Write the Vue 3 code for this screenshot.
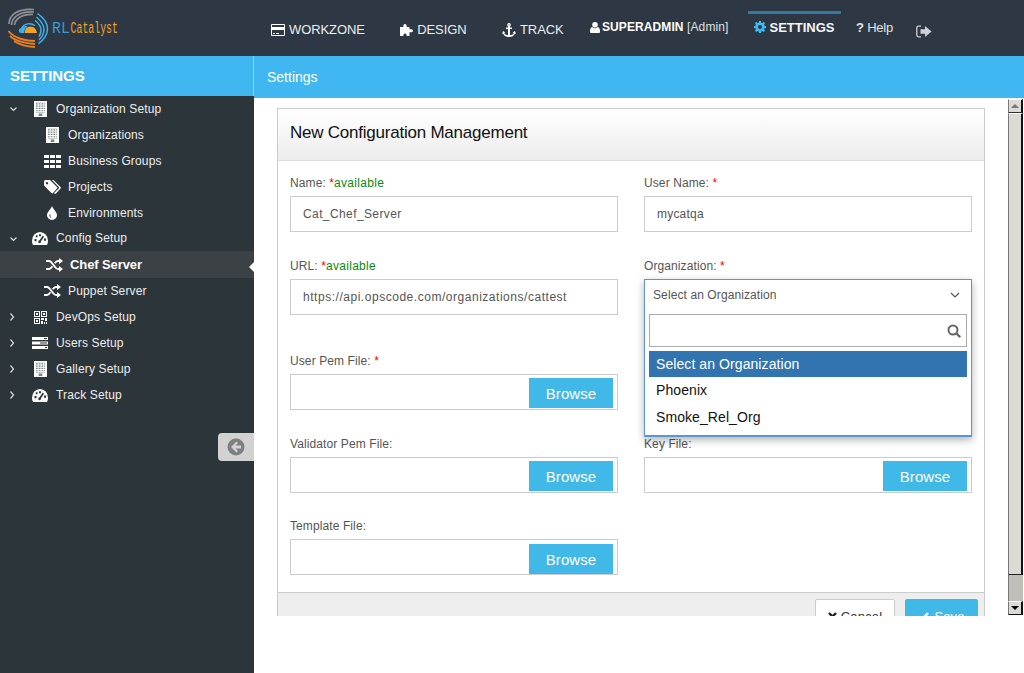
<template>
  <svg class="defs" width="0" height="0">
    <symbol id="i-building" viewBox="0 0 14 18" preserveAspectRatio="none">
      <path fill="#fff" d="M0 0h14v18H0z" />
      <path fill="#7d8285" d="M2 2h10v1H2zM2 4h10v1H2zM2 6h10v1H2zM2 8h10v1H2zM2 10h10v1H2zM2 12h10v1H2zM5 14h4v3H5z" />
      <path fill="#fff" d="M4 2h1v11H4zM7 2h1v11H7zM10 2h1v11h-1z" />
    </symbol>
    <symbol id="i-th" viewBox="0 0 17 13">
      <path fill="#fff" d="M0 0h5v3H0zM6 0h5v3H6zM12 0h5v3h-5zM0 5h5v3H0zM6 5h5v3H6zM12 5h5v3h-5zM0 10h5v3H0zM6 10h5v3H6zM12 10h5v3h-5z" />
    </symbol>
    <symbol id="i-tags" viewBox="0 0 17 14">
      <path fill="#fff" d="M0 1.5Q0 0 1.500 0H6l7 7q.8.8 0 1.600L9 13q-.8.8-1.600 0L.5 6Q0 5.500 0 5zM3 2a1.200 1.200 0 1 0 .01 0z" />
      <path fill="#fff" d="M8 0h1.500l7 7q.8.8 0 1.600L12 13.400q-.8.800-1.600 0l-.4-.4 4.700-4.400q.8-.8 0-1.600z" />
    </symbol>
    <symbol id="i-tint" viewBox="0 0 10 14">
      <path fill="#fff" d="M5 0c1 3 5 6 5 9.200A5 4.800 0 0 1 0 9.200C0 6 4 3 5 0z" />
      <path fill="#2c3539" d="M2.500 8.500q-.6 2.500 2 3.500-1.800-1.500-1-3.500z" />
    </symbol>
    <symbol id="i-dash" viewBox="0 0 16 12" preserveAspectRatio="none">
      <path fill="#fff" d="M8 0a8 8 0 0 1 8 8c0 1.500-.4 2.800-1 4H1C.4 10.800 0 9.500 0 8a8 8 0 0 1 8-8z" />
      <path fill="#2c3539" d="M7 2h2v2H7zM2.500 6.500h2v2h-2zM12 6h2v2h-2zM3.800 3h1.700v1.800H3.800zM10.800 3.300l1.200 1-3 4.200a1.400 1.400 0 1 1-1.500-1z" />
    </symbol>
    <symbol id="i-random" viewBox="0 0 17 14">
      <path fill="none" stroke="#fff" stroke-width="1.800" d="M0 3h3c3.500 0 5.500 8 9 8h2M0 11h3c1.400 0 2.500-1.300 3.400-2.800M8.600 5.200C9.500 4 10.600 3 12 3h2" />
      <path fill="#fff" d="M13 0l4 3-4 3zM13 8l4 3-4 3z" />
    </symbol>
    <symbol id="i-qr" viewBox="0 0 13 13">
      <path fill="#fff" fill-rule="evenodd" d="M0 0h6v6H0zM1 1v4h4V1zM7 0h6v6H7zM8 1v4h4V1zM0 7h6v6H0zM1 8v4h4V8zM2 2h2v2H2zM9 2h2v2H9zM2 9h2v2H2zM7 7h3v2H7zM11 7h2v3h-2zM7 10h2v3H7zM10 11h1v2h-1zM12 11h1v2h-1z" />
    </symbol>
    <symbol id="i-rows" viewBox="0 0 16 12">
      <path fill="#fff" d="M0 0h16v3H0zM0 4.500h16v3H0zM0 9h16v3H0z" />
      <path fill="#2c3539" d="M12 1h3v1h-3zM8 5.500h7v1H8zM13 10h2v1h-2z" />
    </symbol>
    <symbol id="i-card" viewBox="0 0 14 12">
      <path fill="#fff" fill-rule="evenodd" d="M1 0h12a1 1 0 0 1 1 1v10a1 1 0 0 1-1 1H1a1 1 0 0 1-1-1V1a1 1 0 0 1 1-1zM1 6v5h12V6zM1 1v2h12V1z" />
      <path fill="#fff" d="M2 9h2v1H2zM5 9h3v1H5z" />
    </symbol>
    <symbol id="i-puzzle" viewBox="0 0 13 12">
      <path fill="#fff" d="M0 3h3.500C3 2.500 3 .2 5 0c2 .2 2 2.500 1.500 3H9.500v2.500c.6-.6 3.500-.5 3.500 1.200s-2.900 1.900-3.500 1.300V12H6.500c.4-.8 0-2.500-1.500-2.500S3.100 11.200 3.500 12H0z" />
    </symbol>
    <symbol id="i-anchor" viewBox="0 0 14 14">
      <path fill="#fff" fill-rule="evenodd" d="M7 0a1.800 1.800 0 0 1 1 3.300V4.500h2V6H8v6.200c1.900-.2 3.300-1 3.900-2.200l-1.200-.4L13 8l1 3-1-.6C12 12.600 9.800 14 7 14s-5-1.400-6-3.600L0 11l1-3 2.300 1.600-1.200.4C2.700 11.200 4.100 12 6 12.200V6H4V4.500h2V3.300A1.800 1.800 0 0 1 7 0zm0 1.200a.6.6 0 1 0 0 1.200.6.600 0 0 0 0-1.200z" />
    </symbol>
    <symbol id="i-user" viewBox="0 0 10 11">
      <circle fill="#fff" cx="5" cy="2.800" r="2.800" />
      <path fill="#fff" d="M2.200 5C.6 5.500 0 7 0 9.500 0 10.500.5 11 1.300 11h7.400c.8 0 1.300-.5 1.300-1.500C10 7 9.400 5.500 7.800 5 7 6 6 6.300 5 6.300S3 6 2.200 5z" />
    </symbol>
    <symbol id="i-gear" viewBox="0 0 12 12">
      <path fill="#40b7f0" fill-rule="evenodd" d="M5 0h2l.3 1.700 1 .4L9.800 1l1.300 1.300-1 1.500.4 1L12 5v2l-1.500.3-.4 1 1 1.500-1.300 1.300-1.500-1-1 .4L7 12H5l-.3-1.500-1-.4-1.500 1L.9 9.800l1-1.500-.4-1L0 7V5l1.500-.3.400-1-1-1.400L2.200 1l1.500 1 1-.4zM6 4a2 2 0 1 0 0 4 2 2 0 0 0 0-4z" />
    </symbol>
    <symbol id="i-logout" viewBox="0 0 16 13">
      <path fill="none" stroke="#cfd2d4" stroke-width="1.300" d="M5 1.200H2.500Q.8 1.200.8 3v7q0 1.800 1.700 1.800H5" />
      <path fill="#cfd2d4" d="M4.500 4.200H9V1l6.500 5.500L9 12V8.800H4.500z" />
    </symbol>
  </svg>

  <div class="app">
    <header class="top">
      <div class="logo">
        <svg class="logo-mark" viewBox="8 8 41 41" width="41" height="41">
          <g fill="none">
            <path stroke="#8f9193" stroke-width="1.700" d="M9 24C9 15 18 8 34 9.500M11.500 25C12 17 20 11 34 12M14.500 25C15 19 22 14 33 14.500" />
            <path stroke="#3db1ea" stroke-width="1.500" d="M37.500 13.500C44 18 47.500 24 47.500 29 47.500 34 44 40 38.500 43.500M36.500 17C41 21 44 25 44 29.500 44 33 42 37 39 40M35 20.500C39 23.500 41 26.500 41 30 41 32.500 40 35 39 36.500" />
            <path stroke="#ed7d1e" stroke-width="1.800" d="M8.500 31C12 36 22 41 35 41M10 36C14 40 24 43.500 35 44M14 41C19 44.500 27 46.500 35 47" />
            <path stroke="#3db1ea" stroke-width="1.400" d="M21.500 28C24 24 30 22 35 25.500" />
          </g>
          <path fill="#3db1ea" d="M24 33h-3q-2.500-.5-2.300-2.500t2.800-2.400q1.500-2.300 4.500-2.100 1.500 0 1.500 1-3 1-3.500 6z" />
          <path fill="#f0a226" d="M24.500 33q.5-6.500 6-6.500t6.500 6.500z" />
        </svg>
        <span class="logo-text"><span class="logo-rl">RL</span><span class="logo-cat">Catalyst</span></span>
      </div>
      <nav class="nav">
        <a class="nav-link workzone"><svg class="nav-ic" width="14" height="12"><use href="#i-card" /></svg>WORKZONE</a>
        <a class="nav-link gap"><svg class="nav-ic" width="13" height="12"><use href="#i-puzzle" /></svg>DESIGN</a>
        <a class="nav-link gap"><svg class="nav-ic" width="14" height="14"><use href="#i-anchor" /></svg>TRACK</a>
        <span class="who"><svg class="who-ic" width="10" height="11"><use href="#i-user" /></svg><b>SUPERADMIN</b> [Admin]</span>
        <a class="nav-set"><svg class="set-ic" width="12" height="12"><use href="#i-gear" /></svg>SETTINGS</a>
        <a class="help"><b>?</b> Help</a>
        <svg class="logout" width="16" height="13"><use href="#i-logout" /></svg>
      </nav>
    </header>

    <div class="body">
      <aside class="side">
        <div class="side-title">SETTINGS</div>
        <ul class="tree">
          <li
            v-for="item in menu"
            :key="item.label"
            class="row"
            :class="{ child: item.child, active: item.active, short: item.short }"
          >
            <svg v-if="item.open !== undefined" class="chev" width="10" height="10" viewBox="0 0 10 10">
              <path fill="none" stroke="#d9dbdc" stroke-width="1.200" :d="item.open ? 'M2.500 3.500l3 3 3-3' : 'M2.500 1.500l3 3.500-3 3.500'" />
            </svg>
            <span class="ic-slot">
              <svg :width="item.w" :height="item.h"><use :href="'#i-' + item.icon" /></svg>
            </span>
            <span class="row-text">{{ item.label }}</span>
          </li>
        </ul>
        <div class="collapse">
          <svg width="18" height="18" viewBox="0 0 18 18">
            <circle cx="9" cy="9" r="8.500" fill="#7d8083" />
            <path fill="#d2d2d2" d="M9.500 3.500l1.500 1.500-2.500 2.500H14v3H8.500L11 13l-1.500 1.500L4 9z" />
          </svg>
        </div>
      </aside>

      <main class="main">
        <div class="crumb">Settings</div>
        <div class="scroll">
          <div class="view">
            <section class="panel">
              <h2 class="panel-head">New Configuration Management</h2>
              <form class="form" @submit.prevent>
                <div class="field">
                  <label>Name: <i>*</i><em>available</em></label>
                  <input class="text cat" value="Cat_Chef_Server" />
                </div>
                <div class="field">
                  <label>User Name: <i>*</i></label>
                  <input class="text" value="mycatqa" />
                </div>
                <div class="field url">
                  <label>URL: <i>*</i><em>available</em></label>
                  <input class="text long" value="https://api.opscode.com/organizations/cattest" />
                </div>
                <div class="field url org">
                  <label>Organization: <i>*</i></label>
                  <div class="drop">
                    <div class="drop-head">
                      Select an Organization
                      <svg width="10" height="10" viewBox="0 0 10 10">
                        <path fill="none" stroke="#555" stroke-width="1.200" d="M1 3l4 4 4-4" />
                      </svg>
                    </div>
                    <div class="drop-search">
                      <svg width="14" height="14" viewBox="0 0 14 14">
                        <circle cx="6" cy="6" r="4.500" fill="none" stroke="#666" stroke-width="2" />
                        <path stroke="#666" stroke-width="2.400" stroke-linecap="round" d="M9.500 9.500l3 3" />
                      </svg>
                    </div>
                    <ul class="drop-list">
                      <li v-for="(org, i) in orgs" :key="org" :class="{ picked: i === 0 }">{{ org }}</li>
                    </ul>
                  </div>
                </div>
                <div class="field">
                  <label>User Pem File: <i>*</i></label>
                  <div class="file"><span class="browse">Browse</span></div>
                </div>
                <div class="field"></div>
                <div class="field">
                  <label>Validator Pem File:</label>
                  <div class="file"><span class="browse">Browse</span></div>
                </div>
                <div class="field">
                  <label>Key File:</label>
                  <div class="file"><span class="browse">Browse</span></div>
                </div>
                <div class="field last">
                  <label>Template File:</label>
                  <div class="file"><span class="browse">Browse</span></div>
                </div>
              </form>
              <footer class="foot">
                <button class="btn cancel" type="button">
                  <svg width="9" height="9" viewBox="0 0 9 9"><path stroke="#222" stroke-width="2.400" d="M1 1l7 7M8 1L1 8" /></svg>
                  Cancel
                </button>
                <button class="btn save" type="button">
                  <svg width="11" height="9" viewBox="0 0 11 9"><path fill="none" stroke="#fff" stroke-width="2.400" d="M1 4.500l3 3 6-6.500" /></svg>
                  Save
                </button>
              </footer>
            </section>
          </div>
          <div class="bar">
            <div class="bar-btn"><span class="tri up"></span></div>
            <div class="bar-thumb"></div>
            <div class="bar-track"></div>
            <div class="bar-btn low"><span class="tri down"></span></div>
          </div>
        </div>
      </main>
    </div>
  </div>
</template>

<script setup>
const menu = [
  { label: 'Organization Setup', icon: 'building', w: 13, h: 16, open: true },
  { label: 'Organizations', icon: 'building', w: 13, h: 16, child: true },
  { label: 'Business Groups', icon: 'th', w: 17, h: 13, child: true },
  { label: 'Projects', icon: 'tags', w: 17, h: 14, child: true },
  { label: 'Environments', icon: 'tint', w: 10, h: 14, child: true },
  { label: 'Config Setup', icon: 'dash', w: 16, h: 13, open: true, short: true },
  { label: 'Chef Server', icon: 'random', w: 17, h: 14, child: true, active: true },
  { label: 'Puppet Server', icon: 'random', w: 17, h: 14, child: true },
  { label: 'DevOps Setup', icon: 'qr', w: 13, h: 13, open: false },
  { label: 'Users Setup', icon: 'rows', w: 16, h: 12, open: false },
  { label: 'Gallery Setup', icon: 'building', w: 13, h: 16, open: false },
  { label: 'Track Setup', icon: 'dash', w: 16, h: 13, open: false }
]

const orgs = ['Select an Organization', 'Phoenix', 'Smoke_Rel_Org']
</script>

<style>
html, body {
  margin: 0;
  background: #fff;
  overflow: hidden;
}
</style>

<style scoped>
.defs {
  position: absolute;
}
.app {
  display: flex;
  flex-direction: column;
  height: 673px;
  font-family: "Liberation Sans", Arial, sans-serif;
}
.top {
  display: flex;
  height: 56px;
  background: #2e3844;
  flex-shrink: 0;
}
.logo {
  width: 271px;
  display: flex;
  align-items: center;
  padding-left: 8px;
  box-sizing: border-box;
}
.logo-mark {
  flex-shrink: 0;
}
.logo-text {
  display: inline-block;
  margin-left: 3px;
  font-family: "Liberation Mono", monospace;
  font-size: 17px;
  transform: scaleX(.58);
  transform-origin: left center;
  white-space: nowrap;
}
.logo-rl {
  display: inline-block;
  width: 32px;
  color: #3a9bd0;
  transform: scaleX(1.5);
  transform-origin: left center;
}
.logo-cat {
  color: #f0a226;
}
.nav {
  display: flex;
  align-items: flex-start;
  flex: 1;
  color: #fff;
  font-size: 13px;
  white-space: nowrap;
}
.nav-link {
  display: flex;
  align-items: center;
  height: 15px;
  margin-top: 22px;
  color: #eceeef;
  letter-spacing: -.1px;
}
.nav-ic {
  margin-right: 4px;
}
.gap {
  margin-left: 35.500px;
}
.who {
  display: flex;
  align-items: center;
  margin: 20px 0 0 26.400px;
  font-size: 12px;
  letter-spacing: .1px;
  color: #dfe1e3;
  white-space: pre;
}
.who b {
  color: #fff;
}
.who-ic {
  margin-right: 2px;
}
.nav-set {
  margin: 11px 0 0 20px;
  width: 93px;
  box-sizing: border-box;
  height: 45px;
  padding: 6px 0 0 6px;
  border-top: 3px solid #30799f;
  font-weight: bold;
  color: #f4f5f6;
  display: flex;
  align-items: flex-start;
}
.set-ic {
  margin: 1px 3px 0 0;
}
.help {
  margin: 20px 0 0 14.500px;
  letter-spacing: -.2px;
  color: #e3e5e7;
}
.logout {
  margin: 25px 0 0 23px;
}
.body {
  display: flex;
  flex: 1;
  min-height: 0;
}
.side {
  position: relative;
  width: 254px;
  flex-shrink: 0;
  background: #2c3539;
  color: #fff;
}
.side-title {
  height: 40px;
  line-height: 40px;
  padding-left: 10px;
  background: #40b7f0;
  border-right: 1px solid #8ad4f6;
  font-size: 15px;
  font-weight: bold;
  letter-spacing: -.05px;
}
.tree {
  list-style: none;
  margin: 0;
  padding: 0;
}
.row {
  position: relative;
  display: flex;
  align-items: center;
  height: 26px;
  font-size: 12px;
  letter-spacing: .15px;
  color: #eceeef;
}
.short {
  height: 25px;
}
.short .row-text {
  margin-top: -1px;
}
.chev {
  position: absolute;
  left: 8px;
  top: 8px;
}
.ic-slot {
  display: flex;
  justify-content: center;
  align-items: center;
  width: 16px;
  margin: 0 8px 0 32px;
}
.child .ic-slot {
  width: 18px;
  margin: 0 7px 0 43px;
}
.active {
  height: 27px;
  background: #3b4144;
  font-weight: bold;
  font-size: 13px;
  letter-spacing: -.1px;
  color: #fff;
}
.active .ic-slot {
  margin-right: 7px;
  margin-left: 45px;
}
.active::after {
  content: '';
  position: absolute;
  right: 0;
  top: 11px;
  border: 5px solid transparent;
  border-right-color: #fff;
  border-left-width: 0;
}
.collapse {
  position: absolute;
  right: 0;
  top: 377px;
  width: 36px;
  height: 28px;
  box-sizing: border-box;
  padding: 5px 0 0 9px;
  background: #d2d2d2;
  border-radius: 4px 0 0 4px;
}
.main {
  flex: 1;
  min-width: 0;
  display: flex;
  flex-direction: column;
}
.crumb {
  height: 42px;
  line-height: 42px;
  padding-left: 13px;
  background: #40b7f0;
  color: #fff;
  font-size: 14px;
  flex-shrink: 0;
}
.scroll {
  display: flex;
  height: 518px;
  flex-shrink: 0;
}
.view {
  flex: 1;
  min-width: 0;
  overflow: hidden;
  padding: 10px 0 0 23px;
  box-sizing: border-box;
}
.panel {
  width: 708px;
  box-sizing: border-box;
  border: 1px solid #ccc;
}
.panel-head {
  margin: 0;
  height: 52px;
  line-height: 48px;
  padding-left: 12px;
  box-sizing: border-box;
  border-bottom: 1px solid #ddd;
  background: linear-gradient(#fff, #ececec);
  font-size: 17px;
  font-weight: normal;
  color: #111;
  letter-spacing: -.23px;
}
.form {
  display: grid;
  grid-template-columns: 328px 328px;
  column-gap: 26px;
  row-gap: 27px;
  padding: 15px 12px 17px;
}
.field {
  position: relative;
  min-height: 56px;
}
.url {
  margin-bottom: 12px;
}
.last {
  margin-top: -1px;
}
label {
  display: block;
  height: 14px;
  line-height: 14px;
  margin-bottom: 6px;
  font-size: 12px;
  letter-spacing: .1px;
  color: #555;
}
label i {
  font-style: normal;
  color: #f00;
}
label em {
  font-style: normal;
  color: #0a8a0a;
  letter-spacing: .3px;
}
.text {
  display: block;
  width: 100%;
  height: 36px;
  box-sizing: border-box;
  padding: 0 12px;
  border: 1px solid #ccc;
  font: 12px "Liberation Sans", Arial, sans-serif;
  letter-spacing: .2px;
  color: #555;
  outline: none;
}
.cat {
  letter-spacing: .4px;
}
.long {
  letter-spacing: .53px;
}
.file {
  display: flex;
  justify-content: flex-end;
  height: 36px;
  box-sizing: border-box;
  padding: 3px 4px;
  border: 1px solid #ccc;
}
.last .file {
  padding-top: 4px;
}
.browse {
  width: 84px;
  height: 30px;
  line-height: 32px;
  text-align: center;
  background: #40b8e8;
  color: #fff;
  font-size: 15px;
  letter-spacing: .1px;
}
.drop {
  position: absolute;
  z-index: 5;
  left: 0;
  right: 0;
  top: 20px;
  height: 158px;
  box-sizing: border-box;
  background: #fff;
  border: 1px solid #5b97cd;
  border-bottom-width: 2px;
  box-shadow: 0 3px 8px rgba(0, 0, 0, .3);
}
.drop-head {
  display: flex;
  justify-content: space-between;
  align-items: center;
  height: 30px;
  padding: 0 11px 0 8px;
  font-size: 12px;
  letter-spacing: .1px;
  color: #555;
}
.drop-search {
  display: flex;
  justify-content: flex-end;
  align-items: center;
  height: 33px;
  box-sizing: border-box;
  margin: 4px;
  padding-right: 5px;
  border: 1px solid #aaa;
}
.drop-list {
  list-style: none;
  margin: 0 4px;
  padding: 0;
  font-size: 14px;
  letter-spacing: .08px;
  color: #111;
}
.drop-list li {
  height: 27px;
  line-height: 26px;
  padding-left: 7px;
}
.drop-list .picked {
  height: 26px;
  background: #3274b0;
  color: #fff;
}
.foot {
  display: flex;
  justify-content: flex-end;
  gap: 10px;
  height: 60px;
  box-sizing: border-box;
  padding: 6px 6px 0 0;
  background: #eee;
  border-top: 1px solid #ccc;
}
.btn {
  display: flex;
  align-items: center;
  justify-content: center;
  height: 34px;
  box-sizing: border-box;
  border-radius: 2px;
  font: 13px "Liberation Sans", Arial, sans-serif;
  letter-spacing: .15px;
  padding: 0;
}
.cancel {
  width: 80px;
  gap: 4px;
  background: #fff;
  border: 1px solid #ccc;
  color: #333;
}
.save {
  width: 73px;
  gap: 5px;
  background: #40b8e8;
  border: 1px solid #40b8e8;
  color: #fff;
}
.bar {
  width: 16px;
  height: 517px;
  display: flex;
  flex-direction: column;
  box-sizing: border-box;
  padding-top: 1px;
  background: #fff;
}
.bar-btn {
  display: flex;
  align-items: center;
  justify-content: center;
  width: 15px;
  height: 14px;
  background: #dcdad5;
  border: 1px solid #777;
  border-top-color: #fff;
  border-right: 2px solid #111;
  border-bottom-color: #333;
  box-sizing: border-box;
  flex-shrink: 0;
}
.bar-btn.low {
  border-bottom-color: #111;
  border-top-color: #fff;
}
.bar-thumb {
  width: 15px;
  height: 462px;
  background: #dcdad5;
  border: 1px solid #777;
  border-top-color: #fff;
  border-right: 2px solid #111;
  border-bottom-color: #222;
  box-sizing: border-box;
  flex-shrink: 0;
}
.bar-track {
  width: 15px;
  flex: 1;
  box-sizing: border-box;
  background: #bfbeb8;
  border-left: 1px solid #777;
  border-right: 2px solid #bfbeb8;
}
.tri {
  width: 0;
  height: 0;
  border: 4px solid transparent;
}
.up {
  border-top-width: 0;
  border-bottom-color: #777;
}
.down {
  border-bottom-width: 0;
  border-top-color: #000;
}
</style>
